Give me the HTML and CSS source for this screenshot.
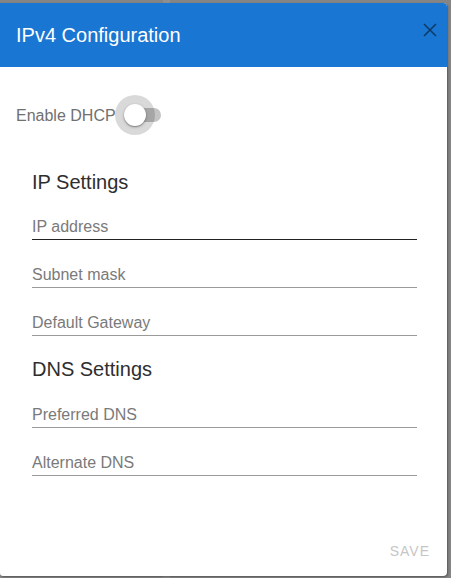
FILE: index.html
```html
<!DOCTYPE html>
<html>
<head>
<meta charset="utf-8">
<link rel="stylesheet" href="styles.css">
</head>
<body>
<div class="dialog">
  <header class="dialog-header">
    <h1 class="dialog-title">IPv4 Configuration</h1>
    <button class="close-btn" aria-label="close">
      <svg width="14" height="14" viewBox="0 0 14 14"><path d="M1 1 L13 13 M13 1 L1 13" stroke="currentColor" stroke-width="1.6" fill="none"/></svg>
    </button>
  </header>
  <div class="dialog-content">
    <div class="dhcp-row">
      <span class="dhcp-label">Enable DHCP</span>
      <span class="switch">
        <span class="switch-track"></span>
        <span class="switch-halo"></span>
        <span class="switch-thumb"></span>
      </span>
    </div>
    <div class="settings">
      <h2 class="section-title">IP Settings</h2>
      <div class="field field-focused"><span class="field-label">IP address</span></div>
      <div class="field"><span class="field-label">Subnet mask</span></div>
      <div class="field"><span class="field-label">Default Gateway</span></div>
      <h2 class="section-title section-gap">DNS Settings</h2>
      <div class="field"><span class="field-label">Preferred DNS</span></div>
      <div class="field"><span class="field-label">Alternate DNS</span></div>
    </div>
  </div>
  <footer class="dialog-actions">
    <button class="save-btn">SAVE</button>
  </footer>
</div>
</body>
</html>
```
FILE: styles.css
```css
html, body {
  margin: 0;
  padding: 0;
}
body {
  width: 451px;
  height: 578px;
  overflow: hidden;
  background: linear-gradient(to right, #858585 0, #858585 163px, #8f8f8f 163px, #8f8f8f 170px, #858585 170px);
  font-family: "Liberation Sans", Arial, sans-serif;
}
.dialog {
  margin-top: 3px;
  width: 447px;
  height: 573px;
  background: #fff;
  border-radius: 0 4px 4px 3px;
  display: flex;
  flex-direction: column;
  overflow: hidden;
  box-shadow: 1px 1px 2px rgba(0,0,0,0.35);
}
.dialog-header {
  height: 64px;
  flex: none;
  background: #1976d2;
  display: flex;
  align-items: center;
  justify-content: space-between;
  padding: 0 10px 0 16px;
}
.dialog-title {
  margin: 0;
  font-size: 20px;
  font-weight: normal;
  color: #fff;
  line-height: 24px;
}
.close-btn {
  border: none;
  background: none;
  padding: 0;
  width: 14px;
  height: 14px;
  margin: 0 0 10px 0;
  color: rgba(0,0,0,0.5);
  display: flex;
}
.dialog-content {
  padding: 29px 0 0 16px;
  flex: 1;
}
.dhcp-row {
  display: flex;
  align-items: center;
  height: 38px;
}
.dhcp-label {
  font-size: 16px;
  color: #707070;
  line-height: 19px;
}
.switch {
  position: relative;
  width: 58px;
  height: 38px;
  margin-left: -1px;
}
.switch-track {
  position: absolute;
  left: 12px;
  top: 12px;
  width: 34px;
  height: 14px;
  border-radius: 7px;
  background: #c4c4c4;
}
.switch-halo {
  position: absolute;
  left: 0;
  top: -1px;
  width: 40px;
  height: 40px;
  border-radius: 50%;
  background: rgba(0,0,0,0.15);
}
.switch-thumb {
  position: absolute;
  left: 9px;
  top: 8px;
  width: 22px;
  height: 22px;
  border-radius: 50%;
  background: #fff;
  box-shadow: 0 1px 3px rgba(0,0,0,0.3), 0 1px 1px rgba(0,0,0,0.2);
}
.settings {
  padding: 36px 30px 0 16px;
}
.section-title {
  margin: 0;
  padding-top: 2px;
  font-size: 20px;
  font-weight: normal;
  line-height: 20px;
  color: #2e2e2e;
}
.section-gap {
  margin-top: 21px;
  margin-bottom: 1px;
}
.field {
  height: 48px;
  box-sizing: border-box;
  padding-top: 26px;
  border-bottom: 1px solid #9a9a9a;
}
.field-focused {
  border-bottom-color: #222;
}
.field-label {
  display: block;
  font-size: 16px;
  line-height: 18px;
  color: #7a7a7a;
}
.dialog-actions {
  flex: none;
  display: flex;
  justify-content: flex-end;
  padding: 8px 9px 7px 8px;
}
.save-btn {
  border: none;
  background: none;
  height: 36px;
  padding: 0 8px;
  font-family: "Liberation Sans", Arial, sans-serif;
  font-size: 14px;
  letter-spacing: 1px;
  color: #c6c6c6;
}
```
